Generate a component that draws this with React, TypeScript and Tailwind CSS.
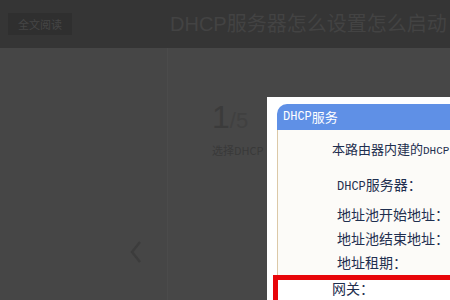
const cjk = "font-['Noto_Sans_CJK_SC',sans-serif]"

function Latin({ children, size = "text-[12px]" }: { children: string; size?: string }) {
    return <span className={`font-['Liberation_Mono',monospace] ${size}`}>{children}</span>
}

function DhcpShot() {
    const rows = [
        { label: "地址池开始地址：", mt: "mt-[8px]" },
        { label: "地址池结束地址：", mt: "mt-[5px]" },
        { label: "地址租期：", mt: "mt-[5px]" },
    ]

    return (
        <div className="relative w-[183px] h-[203px] bg-white pt-[7px] pl-[10px] overflow-hidden">
            <div className="h-[26px] bg-[#5f90e6] rounded-tl-[10px] flex items-center pl-[6px] text-white text-[13px]">
                <Latin>DHCP</Latin>
                <span>服务</span>
            </div>
            <div className="h-full border-l border-[#dcc9a8] bg-[#fcfbf8] text-[#1f2f4f] text-[14px] leading-[19px]">
                <div className="pt-[9px] pl-[54px] whitespace-nowrap text-[13px]">
                    本路由器内建的<Latin size="text-[11px]">DHCP</Latin>
                </div>
                <div className="mt-[14px] pl-[59px] whitespace-nowrap">
                    <Latin>DHCP</Latin>服务器：
                </div>
                {rows.map((r) => (
                    <div key={r.label} className={`${r.mt} pl-[59px] whitespace-nowrap`}>
                        {r.label}
                    </div>
                ))}
            </div>
            <div className="absolute left-[6px] top-[178px] w-[200px] h-[40px] border-[5px] border-[#e8060a] bg-white pl-[54px] text-[#1f2f4f] text-[14px] leading-[17px]">
                网关：
            </div>
        </div>
    )
}

export default function App() {
    return (
        <div className={`w-[450px] h-[300px] bg-[#474747] overflow-hidden flex flex-col ${cjk}`}>
            <div className="h-[48px] shrink-0 bg-[#353535] flex items-center">
                <div className="ml-[8px] w-[64px] h-[22px] bg-[#2f2f2f] flex items-center justify-center text-[11px] text-[#464646]">
                    全文阅读
                </div>
                <div className="ml-[98px] text-[20px] text-[#434343] whitespace-nowrap font-['Liberation_Sans','Noto_Sans_CJK_SC',sans-serif]">
                    DHCP服务器怎么设置怎么启动
                </div>
            </div>

            <div className="flex-1 flex">
                <div className="w-[168px] bg-[#464646] border-r border-[#4b4b4b] relative">
                    <svg className="absolute left-[128px] top-[192px]" width="16" height="24" viewBox="0 0 16 24">
                        <path d="M12 2 L4 12 L12 22" fill="none" stroke="#3c3c3c" strokeWidth="2.5" />
                    </svg>
                </div>
                <div className="w-[98px] pl-[44px] pt-[54px]">
                    <div className="flex items-end whitespace-nowrap font-['Liberation_Sans',sans-serif] text-[#3b3b3b]">
                        <span className="text-[32px] leading-[30px]">1</span>
                        <span className="text-[22px] leading-[22px] text-[#404040]">/5</span>
                    </div>
                    <div className="mt-[10px] text-[11px] text-[#393939] whitespace-nowrap">选择DHCP</div>
                </div>
                <div className="mt-[49px] ml-[1px]">
                    <DhcpShot />
                </div>
            </div>
        </div>
    )
}
